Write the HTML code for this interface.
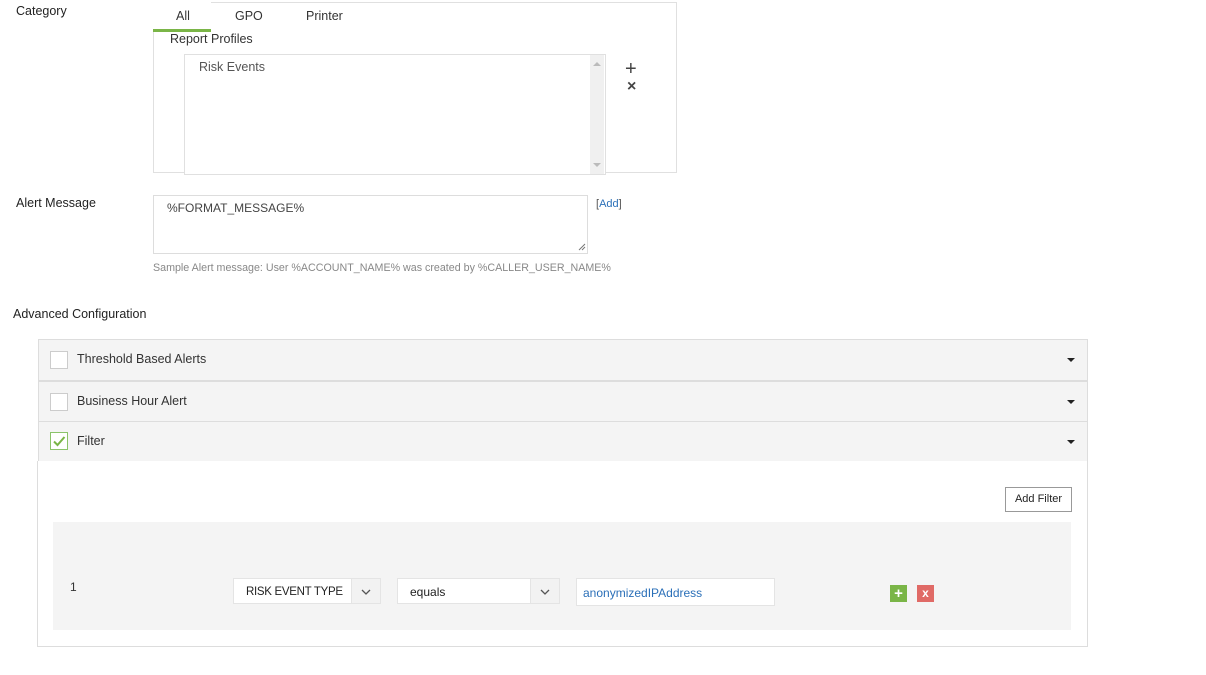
<!DOCTYPE html>
<html><head><style>
body{margin:0;width:1206px;height:675px;background:#fff;font-family:"Liberation Sans",sans-serif;font-size:12px;color:#333;position:relative;overflow:hidden}
.a{position:absolute}
.lbl{font-size:12.5px;color:#222}
.row{position:absolute;left:38px;width:1048px;background:#f4f4f4;border:1px solid #ddd}
.cb{position:absolute;left:11px;width:16px;height:16px;background:#fff;border:1px solid #ccc}
.caret{position:absolute;right:12px;width:0;height:0;border-left:4px solid transparent;border-right:4px solid transparent;border-top:4px solid #222}
.sel{position:absolute;top:578px;height:26px;background:#fff;border:1px solid #e4e4e4;box-sizing:border-box;font-size:12px;line-height:26px;color:#222;white-space:nowrap}
.sel .ar{position:absolute;right:0;top:0;width:28px;height:24px;background:#f2f2f2;border-left:1px solid #e4e4e4}
</style></head><body>
<div class="a lbl" style="left:16px;top:4px">Category</div>
<div class="a" style="left:153px;top:2px;width:522px;height:169px;border:1px solid #e0e0e0"></div>
<div class="a" style="left:153px;top:0;width:58px;height:32px;background:#fff"></div>
<div class="a" style="left:176px;top:9px;font-size:12.5px">All</div>
<div class="a" style="left:235px;top:9px;font-size:12.5px">GPO</div>
<div class="a" style="left:306px;top:9px;font-size:12.5px">Printer</div>
<div class="a" style="left:153px;top:29px;width:58px;height:3px;background:#7ab547"></div>
<div class="a" style="left:170px;top:32px;font-size:12.5px">Report Profiles</div>
<div class="a" style="left:184px;top:54px;width:420px;height:119px;border:1px solid #e0e0e0;background:#fff"></div>
<div class="a" style="left:590px;top:55px;width:14px;height:119px;background:#f0f0f0"></div>
<div class="a" style="left:593px;top:62px;border-left:4px solid transparent;border-right:4px solid transparent;border-bottom:4px solid #bbb"></div>
<div class="a" style="left:593px;top:163px;border-left:4px solid transparent;border-right:4px solid transparent;border-top:4px solid #bbb"></div>
<div class="a" style="left:199px;top:60px;font-size:12.5px;color:#555">Risk Events</div>
<div class="a" style="left:625px;top:58px;font-size:20px;color:#444;line-height:22px">+</div>
<div class="a" style="left:627px;top:78px;font-size:16px;color:#444;font-weight:bold">×</div>

<div class="a lbl" style="left:16px;top:196px">Alert Message</div>
<div class="a" style="left:153px;top:195px;width:433px;height:57px;border:1px solid #ddd"></div>
<svg class="a" style="left:578px;top:243px" width="8" height="8"><path d="M1 7L7 1M4 7L7 4" stroke="#777" stroke-width="1"/></svg>
<div class="a" style="left:167px;top:201px;font-size:12px;color:#444">%FORMAT_MESSAGE%</div>
<div class="a" style="left:596px;top:198px;font-size:11px;color:#555">[<span style="color:#2a6fb8">Add</span>]</div>
<div class="a" style="left:153px;top:262px;font-size:10.7px;color:#888">Sample Alert message: User %ACCOUNT_NAME% was created by %CALLER_USER_NAME%</div>

<div class="a lbl" style="left:13px;top:307px">Advanced Configuration</div>
<div class="row" style="top:339px;height:40px"><div class="cb" style="top:11px"></div><div class="a" style="left:38px;top:12px;font-size:12.5px">Threshold Based Alerts</div><div class="caret" style="top:18px"></div></div>
<div class="row" style="top:381px;height:40px"><div class="cb" style="top:11px"></div><div class="a" style="left:38px;top:12px;font-size:12.5px">Business Hour Alert</div><div class="caret" style="top:18px"></div></div>
<div class="row" style="top:421px;height:40px"><div class="cb" style="top:10px;border-color:#8bc36a"><svg width="16" height="16" style="position:absolute;left:0;top:0"><path d="M3 8.5l3.5 3.5 7-8" stroke="#7ab547" stroke-width="2" fill="none"/></svg></div><div class="a" style="left:38px;top:12px;font-size:12.5px">Filter</div><div class="caret" style="top:18px"></div></div>
<div class="a" style="left:37px;top:461px;width:1049px;height:185px;border:1px solid #ddd;border-top:none;background:#fff"></div>
<div class="a" style="left:1005px;top:487px;width:67px;height:25px;border:1px solid #999;box-sizing:border-box;font-size:11px;line-height:23px;text-align:center;color:#222">Add Filter</div>
<div class="a" style="left:53px;top:522px;width:1018px;height:108px;background:#f4f4f4"></div>
<div class="a" style="left:70px;top:580px;font-size:12px">1</div>
<div class="sel" style="left:233px;width:148px;padding-left:12px;font-size:11.5px;letter-spacing:-0.3px">RISK EVENT TYPE<div class="ar"><svg width="28" height="24"><path d="M10 11l4 4 4-4" stroke="#555" stroke-width="1.3" fill="none"/></svg></div></div>
<div class="sel" style="left:397px;width:163px;padding-left:12px">equals<div class="ar"><svg width="28" height="24"><path d="M10 11l4 4 4-4" stroke="#555" stroke-width="1.3" fill="none"/></svg></div></div>
<div class="sel" style="left:576px;width:199px;padding-left:6px;color:#2a6fb8;height:28px;line-height:28px">anonymizedIPAddress</div>
<div class="a" style="left:890px;top:585px;width:17px;height:17px;background:#7ab547;color:#fff;font-weight:bold;font-size:15px;line-height:17px;text-align:center">+</div>
<div class="a" style="left:917px;top:585px;width:17px;height:17px;background:#e06a66;color:#fff;font-weight:bold;font-size:12px;line-height:17px;text-align:center">x</div>
</body></html>
